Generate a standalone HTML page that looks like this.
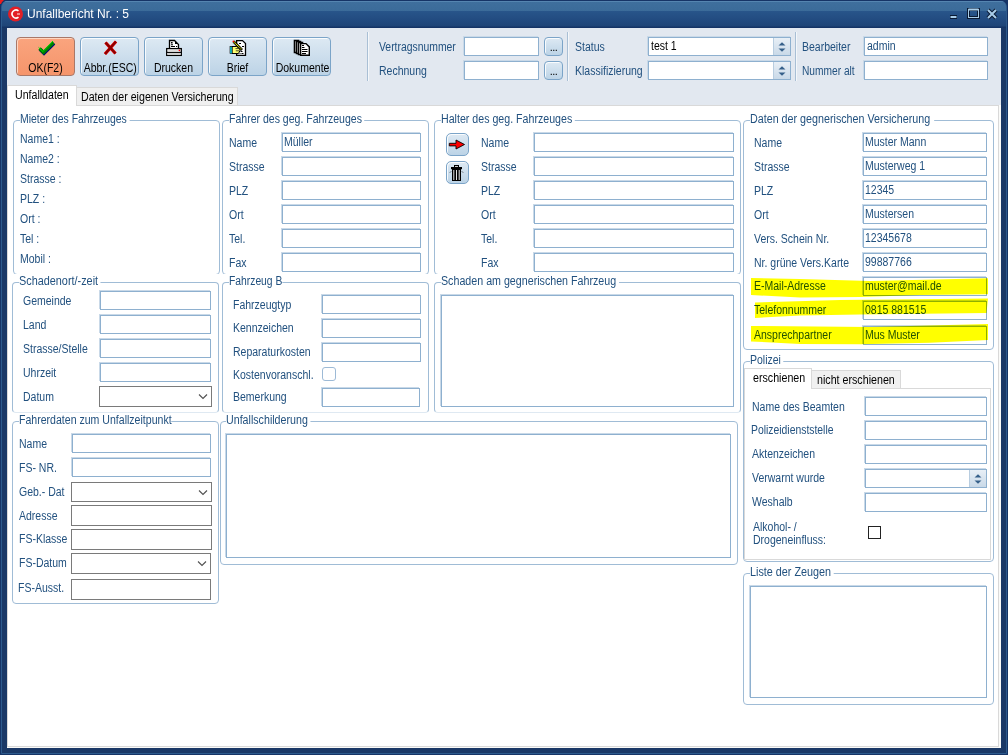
<!DOCTYPE html>
<html><head><meta charset="utf-8"><style>
*{margin:0;padding:0;box-sizing:border-box}
html,body{width:1008px;height:755px;overflow:hidden;background:#163466}
body{position:relative;font-family:"Liberation Sans",sans-serif;font-size:11px}
.t{position:absolute;white-space:nowrap;line-height:13px;font-size:11px}
.t.s{font-size:12px;line-height:14px;transform-origin:0 0;letter-spacing:0}
.a{position:absolute}
.frame{position:absolute;left:1px;top:1px;width:1006px;height:753px;background:#1a3866;border:1px solid #2d5a8c;border-radius:6px 6px 0 0}
.title{position:absolute;left:2px;top:1px;width:1004px;height:27px;background:linear-gradient(#5585b0 0px,#5585b0 1px,#3f6f9d 1px,#3b6b99 10px,#28558a 10px,#224b80 19px,#1f4577 25px,#143466 26px,#143466 27px);border-radius:5px 5px 0 0}
.client{position:absolute;left:7px;top:28px;width:994px;height:720px;background:#e2e8f0}
.page{position:absolute;background:#fff;border:1px solid #d9d9d9}
.tab1{position:absolute;background:#fff;border:1px solid #d9d9d9;border-bottom:none}
.tab2{position:absolute;background:#f0f0f0;border:1px solid #d9d9d9;border-bottom:none}
.ptab{position:absolute;background:#fff;border:1px solid #d9d9d9}
.ib{position:absolute;background:#fff;border:1px solid #8eb0cf;box-shadow:-1px -1px 0 #c9d9e8}
.ig{position:absolute;background:#fff;border:1px solid #7a7a7a}
.spin{position:absolute;background:linear-gradient(#e8eff6,#c9d9e8);border-left:1px solid #b8cde0}
.gb{position:absolute;border:1px solid #a0bcd6}
.clip{position:absolute;overflow:hidden}
.cap{background:#fff;padding-right:5px}
.tb{position:absolute;border:1px solid #7ba4c8;border-radius:4px;background:linear-gradient(#dde9f3,#bcd3e6);box-shadow:inset 1px 1px 0 rgba(255,255,255,0.85)}
.tb.or{border-color:#a97868;background:linear-gradient(#faa47e,#f5956b);box-shadow:inset 1px 1px 0 rgba(255,220,200,0.9)}
.sep{position:absolute;width:1px;background:#a9bfd5;box-shadow:1px 0 0 #f4f7fa}
.dots{position:absolute;border:1px solid #7ba4c8;border-radius:4px;background:linear-gradient(#dde9f3,#bcd3e6);box-shadow:inset 1px 1px 0 rgba(255,255,255,0.85);font-size:11px;line-height:19px;text-align:center;color:#000;letter-spacing:-0.5px}
.sb{position:absolute;border:1px solid #7ba4c8;border-radius:5px;background:linear-gradient(#dde9f3,#bcd3e6);box-shadow:inset 1px 1px 0 rgba(255,255,255,0.85)}
.ta{position:absolute;background:#fff;border:1px solid #8eb0cf;box-shadow:-1px -1px 0 #c9d9e8}
.cb{position:absolute;border:1px solid #9dbad6;border-radius:3px;background:#fff}
.cbk{position:absolute;border:1px solid #222;background:#fff}
.hl{position:absolute;background:#ffff00;mix-blend-mode:multiply}
</style></head><body>
<div class="frame"></div>
<svg class="a" style="left:0;top:0" width="5" height="5"><path d="M0 0H4L2 2L1 4H0Z" fill="#ec1c1c"/></svg>
<div class="title"></div>
<div class="client"></div>
<svg class="a" style="left:8px;top:6px" width="16" height="16"><circle cx="7.5" cy="8" r="7.5" fill="#e21f26"/><path d="M10.5 4.8 A4 4 0 1 0 10.5 11.2" fill="none" stroke="#fff" stroke-width="1.6"/><path d="M9 8h3" stroke="#f5a0a0" stroke-width="1.6"/></svg>
<div class="t" style="left:27px;top:7px;font-size:12px;line-height:14px;color:#fff;letter-spacing:0px">Unfallbericht Nr. : 5</div>
<svg class="a" style="left:948px;top:7px" width="52" height="14"><path d="M2 10h7" stroke="#0a1a33" stroke-width="4"/><path d="M2.5 10h6" stroke="#a9cde9" stroke-width="2"/><rect x="20.5" y="2.5" width="10" height="8" fill="none" stroke="#0a1a33" stroke-width="3"/><rect x="20.5" y="2.5" width="10" height="8" fill="none" stroke="#a9cde9" stroke-width="1"/><path d="M20.5 2.5h10" stroke="#a9cde9" stroke-width="2"/><path d="M40 3 L48 11 M48 3 L40 11" stroke="#0a1a33" stroke-width="4"/><path d="M40 3 L48 11 M48 3 L40 11" stroke="#a9cde9" stroke-width="2"/></svg>
<div class="tb or" style="left:16px;top:37px;width:59px;height:39px"></div>
<div class="t s" style="left:16px;top:61px;width:59px;text-align:center;color:#000;transform:scaleX(0.875);transform-origin:50% 0">OK(F2)</div>
<div class="tb" style="left:80px;top:37px;width:59px;height:39px"></div>
<div class="t s" style="left:80px;top:61px;width:59px;text-align:center;color:#000;transform:scaleX(0.875);transform-origin:50% 0">Abbr.(ESC)</div>
<div class="tb" style="left:144px;top:37px;width:59px;height:39px"></div>
<div class="t s" style="left:144px;top:61px;width:59px;text-align:center;color:#000;transform:scaleX(0.875);transform-origin:50% 0">Drucken</div>
<div class="tb" style="left:208px;top:37px;width:59px;height:39px"></div>
<div class="t s" style="left:208px;top:61px;width:59px;text-align:center;color:#000;transform:scaleX(0.875);transform-origin:50% 0">Brief</div>
<div class="tb" style="left:272px;top:37px;width:59px;height:39px"></div>
<div class="t s" style="left:272px;top:61px;width:59px;text-align:center;color:#000;transform:scaleX(0.875);transform-origin:50% 0">Dokumente</div>
<div class="sep" style="left:367px;top:32px;height:49px"></div>
<div class="sep" style="left:567px;top:32px;height:49px"></div>
<div class="sep" style="left:795px;top:32px;height:49px"></div>
<div class="t s" style="left:379px;top:40px;color:#22517f;transform:scaleX(0.866);">Vertragsnummer</div>
<div class="t s" style="left:379px;top:64px;color:#22517f;transform:scaleX(0.875);">Rechnung</div>
<div class="ib" style="left:464px;top:37px;width:75px;height:19px"></div>
<div class="ib" style="left:464px;top:61px;width:75px;height:19px"></div>
<div class="dots" style="left:544px;top:37px;width:19px;height:19px">...</div>
<div class="dots" style="left:544px;top:61px;width:19px;height:19px">...</div>
<div class="t s" style="left:575px;top:40px;color:#22517f;transform:scaleX(0.875);">Status</div>
<div class="t s" style="left:575px;top:64px;color:#22517f;transform:scaleX(0.875);">Klassifizierung</div>
<div class="ib" style="left:648px;top:37px;width:143px;height:19px"></div>
<div class="spin" style="left:773px;top:38px;width:17px;height:17px"></div>
<svg class="a" style="left:777.5px;top:40.5px" width="8" height="12"><path d="M0.5 4.5 L4 1.2 L7.5 4.5Z M0.5 7.5 L4 10.8 L7.5 7.5Z" fill="#36608a"/></svg>
<div class="t s" style="left:651px;top:39px;color:#000;transform:scaleX(0.875);">test 1</div>
<div class="ib" style="left:648px;top:61px;width:143px;height:19px"></div>
<div class="spin" style="left:773px;top:62px;width:17px;height:17px"></div>
<svg class="a" style="left:777.5px;top:64.5px" width="8" height="12"><path d="M0.5 4.5 L4 1.2 L7.5 4.5Z M0.5 7.5 L4 10.8 L7.5 7.5Z" fill="#36608a"/></svg>
<div class="t s" style="left:802px;top:40px;color:#22517f;transform:scaleX(0.875);">Bearbeiter</div>
<div class="t s" style="left:802px;top:64px;color:#22517f;transform:scaleX(0.85);">Nummer alt</div>
<div class="ib" style="left:864px;top:37px;width:124px;height:19px"></div>
<div class="t s" style="left:867px;top:39px;color:#22517f;transform:scaleX(0.875);">admin</div>
<div class="ib" style="left:864px;top:61px;width:124px;height:19px"></div>
<div style="position:absolute;left:7px;top:105px;width:994px;height:643px;background:#fafaf8"></div>
<div class="page" style="left:7px;top:105px;width:992px;height:642px"></div>
<div class="tab2" style="left:76px;top:87px;width:162px;height:18px"></div>
<div class="tab1" style="left:7px;top:85px;width:70px;height:21px"></div>
<div class="t s" style="left:15px;top:88px;color:#000;transform:scaleX(0.883);">Unfalldaten</div>
<div class="t s" style="left:81px;top:90px;color:#000;transform:scaleX(0.887);">Daten der eigenen Versicherung</div>
<div class="clip" style="left:13px;top:120px;width:207px;height:154px"><div class="gb" style="left:0;top:0;width:207px;height:155px;border-radius:4px"></div></div>
<div class="t s cap" style="left:20px;top:112px;color:#22517f;transform:scaleX(0.87);padding-right:3px">Mieter des Fahrzeuges</div>
<div class="t s" style="left:20px;top:132px;color:#22517f;transform:scaleX(0.875);">Name1 :</div>
<div class="t s" style="left:20px;top:152px;color:#22517f;transform:scaleX(0.875);">Name2 :</div>
<div class="t s" style="left:20px;top:172px;color:#22517f;transform:scaleX(0.875);">Strasse :</div>
<div class="t s" style="left:20px;top:192px;color:#22517f;transform:scaleX(0.875);">PLZ :</div>
<div class="t s" style="left:20px;top:212px;color:#22517f;transform:scaleX(0.875);">Ort :</div>
<div class="t s" style="left:20px;top:232px;color:#22517f;transform:scaleX(0.875);">Tel :</div>
<div class="t s" style="left:20px;top:252px;color:#22517f;transform:scaleX(0.875);">Mobil :</div>
<div class="clip" style="left:222px;top:120px;width:207px;height:154px"><div class="gb" style="left:0;top:0;width:207px;height:155px;border-radius:4px"></div></div>
<div class="t s cap" style="left:229px;top:112px;color:#22517f;transform:scaleX(0.878);padding-right:3px">Fahrer des geg. Fahrzeuges</div>
<div class="t s" style="left:229px;top:136px;color:#22517f;transform:scaleX(0.875);">Name</div>
<div class="ib" style="left:282px;top:133px;width:139px;height:19px"></div>
<div class="t s" style="left:284px;top:135px;color:#22517f;transform:scaleX(0.875);">Müller</div>
<div class="t s" style="left:229px;top:160px;color:#22517f;transform:scaleX(0.875);">Strasse</div>
<div class="ib" style="left:282px;top:157px;width:139px;height:19px"></div>
<div class="t s" style="left:229px;top:184px;color:#22517f;transform:scaleX(0.875);">PLZ</div>
<div class="ib" style="left:282px;top:181px;width:139px;height:19px"></div>
<div class="t s" style="left:229px;top:208px;color:#22517f;transform:scaleX(0.875);">Ort</div>
<div class="ib" style="left:282px;top:205px;width:139px;height:19px"></div>
<div class="t s" style="left:229px;top:232px;color:#22517f;transform:scaleX(0.875);">Tel.</div>
<div class="ib" style="left:282px;top:229px;width:139px;height:19px"></div>
<div class="t s" style="left:229px;top:256px;color:#22517f;transform:scaleX(0.875);">Fax</div>
<div class="ib" style="left:282px;top:253px;width:139px;height:19px"></div>
<div class="clip" style="left:434px;top:120px;width:307px;height:154px"><div class="gb" style="left:0;top:0;width:307px;height:155px;border-radius:4px"></div></div>
<div class="t s cap" style="left:441px;top:112px;color:#22517f;transform:scaleX(0.886);padding-right:3px">Halter des geg. Fahrzeuges</div>
<div class="t s" style="left:481px;top:136px;color:#22517f;transform:scaleX(0.875);">Name</div>
<div class="ib" style="left:534px;top:133px;width:200px;height:19px"></div>
<div class="t s" style="left:481px;top:160px;color:#22517f;transform:scaleX(0.875);">Strasse</div>
<div class="ib" style="left:534px;top:157px;width:200px;height:19px"></div>
<div class="t s" style="left:481px;top:184px;color:#22517f;transform:scaleX(0.875);">PLZ</div>
<div class="ib" style="left:534px;top:181px;width:200px;height:19px"></div>
<div class="t s" style="left:481px;top:208px;color:#22517f;transform:scaleX(0.875);">Ort</div>
<div class="ib" style="left:534px;top:205px;width:200px;height:19px"></div>
<div class="t s" style="left:481px;top:232px;color:#22517f;transform:scaleX(0.875);">Tel.</div>
<div class="ib" style="left:534px;top:229px;width:200px;height:19px"></div>
<div class="t s" style="left:481px;top:256px;color:#22517f;transform:scaleX(0.875);">Fax</div>
<div class="ib" style="left:534px;top:253px;width:200px;height:19px"></div>
<div class="sb" style="left:446px;top:133px;width:23px;height:23px"></div>
<div class="sb" style="left:446px;top:161px;width:23px;height:23px"></div>
<div class="gb" style="left:743px;top:120px;width:251px;height:230px;border-radius:4px;"></div>
<div class="t s cap" style="left:750px;top:112px;color:#22517f;transform:scaleX(0.894);padding-right:5px">Daten der gegnerischen Versicherung</div>
<div class="t s" style="left:754px;top:136px;color:#22517f;transform:scaleX(0.875);">Name</div>
<div class="ib" style="left:863px;top:133px;width:124px;height:19px"></div>
<div class="t s" style="left:865px;top:135px;color:#22517f;transform:scaleX(0.875);">Muster Mann</div>
<div class="t s" style="left:754px;top:160px;color:#22517f;transform:scaleX(0.875);">Strasse</div>
<div class="ib" style="left:863px;top:157px;width:124px;height:19px"></div>
<div class="t s" style="left:865px;top:159px;color:#22517f;transform:scaleX(0.875);">Musterweg 1</div>
<div class="t s" style="left:754px;top:184px;color:#22517f;transform:scaleX(0.875);">PLZ</div>
<div class="ib" style="left:863px;top:181px;width:124px;height:19px"></div>
<div class="t s" style="left:865px;top:183px;color:#22517f;transform:scaleX(0.875);">12345</div>
<div class="t s" style="left:754px;top:208px;color:#22517f;transform:scaleX(0.875);">Ort</div>
<div class="ib" style="left:863px;top:205px;width:124px;height:19px"></div>
<div class="t s" style="left:865px;top:207px;color:#22517f;transform:scaleX(0.875);">Mustersen</div>
<div class="t s" style="left:754px;top:232px;color:#22517f;transform:scaleX(0.875);">Vers. Schein Nr.</div>
<div class="ib" style="left:863px;top:229px;width:124px;height:19px"></div>
<div class="t s" style="left:865px;top:231px;color:#22517f;transform:scaleX(0.875);">12345678</div>
<div class="t s" style="left:754px;top:256px;color:#22517f;transform:scaleX(0.875);">Nr. grüne Vers.Karte</div>
<div class="ib" style="left:863px;top:253px;width:124px;height:19px"></div>
<div class="t s" style="left:865px;top:255px;color:#22517f;transform:scaleX(0.875);">99887766</div>
<div class="t s" style="left:754px;top:279px;color:#22517f;transform:scaleX(0.875);">E-Mail-Adresse</div>
<div class="ib" style="left:863px;top:277px;width:124px;height:19px"></div>
<div class="t s" style="left:865px;top:279px;color:#22517f;transform:scaleX(0.875);">muster@mail.de</div>
<div class="t s" style="left:754px;top:303px;color:#22517f;transform:scaleX(0.875);">Telefonnummer</div>
<div class="ib" style="left:863px;top:301px;width:124px;height:19px"></div>
<div class="t s" style="left:865px;top:303px;color:#22517f;transform:scaleX(0.875);">0815 881515</div>
<div class="t s" style="left:754px;top:328px;color:#22517f;transform:scaleX(0.875);">Ansprechpartner</div>
<div class="ib" style="left:863px;top:326px;width:124px;height:19px"></div>
<div class="t s" style="left:865px;top:328px;color:#22517f;transform:scaleX(0.875);">Mus Muster</div>
<div class="gb" style="left:12px;top:282px;width:207px;height:131px;border-radius:4px;border-bottom-color:#dfe9f2"></div>
<div class="t s cap" style="left:19px;top:274px;color:#22517f;transform:scaleX(0.905);padding-right:3px">Schadenort/-zeit</div>
<div class="t s" style="left:23px;top:294px;color:#22517f;transform:scaleX(0.875);">Gemeinde</div>
<div class="ib" style="left:100px;top:291px;width:111px;height:19px"></div>
<div class="t s" style="left:23px;top:318px;color:#22517f;transform:scaleX(0.875);">Land</div>
<div class="ib" style="left:100px;top:315px;width:111px;height:19px"></div>
<div class="t s" style="left:23px;top:342px;color:#22517f;transform:scaleX(0.875);">Strasse/Stelle</div>
<div class="ib" style="left:100px;top:339px;width:111px;height:19px"></div>
<div class="t s" style="left:23px;top:366px;color:#22517f;transform:scaleX(0.875);">Uhrzeit</div>
<div class="ib" style="left:100px;top:363px;width:111px;height:19px"></div>
<div class="t s" style="left:23px;top:390px;color:#22517f;transform:scaleX(0.875);">Datum</div>
<div class="ig" style="left:99px;top:386px;width:113px;height:21px"></div>
<svg class="a" style="left:197.5px;top:393.0px" width="10" height="7"><path d="M1 1.5 L5 5.5 L9 1.5" fill="none" stroke="#505050" stroke-width="1.1"/></svg>
<div class="gb" style="left:222px;top:282px;width:207px;height:131px;border-radius:4px;border-bottom-color:#dfe9f2"></div>
<div class="t s cap" style="left:229px;top:274px;color:#22517f;transform:scaleX(0.86);padding-right:0px">Fahrzeug B</div>
<div class="t s" style="left:233px;top:298px;color:#22517f;transform:scaleX(0.875);">Fahrzeugtyp</div>
<div class="ib" style="left:322px;top:295px;width:99px;height:19px"></div>
<div class="t s" style="left:233px;top:321px;color:#22517f;transform:scaleX(0.875);">Kennzeichen</div>
<div class="ib" style="left:322px;top:319px;width:99px;height:19px"></div>
<div class="t s" style="left:233px;top:345px;color:#22517f;transform:scaleX(0.875);">Reparaturkosten</div>
<div class="ib" style="left:322px;top:343px;width:99px;height:19px"></div>
<div class="t s" style="left:233px;top:368px;color:#22517f;transform:scaleX(0.875);">Kostenvoranschl.</div>
<div class="cb" style="left:322px;top:367px;width:14px;height:14px"></div>
<div class="t s" style="left:233px;top:390px;color:#22517f;transform:scaleX(0.875);">Bemerkung</div>
<div class="ib" style="left:322px;top:388px;width:98px;height:19px"></div>
<div class="gb" style="left:434px;top:282px;width:307px;height:131px;border-radius:4px;border-bottom-color:#dfe9f2"></div>
<div class="t s cap" style="left:441px;top:274px;color:#22517f;transform:scaleX(0.89);padding-right:3px">Schaden am gegnerischen Fahrzeug</div>
<div class="ta" style="left:441px;top:295px;width:293px;height:112px"></div>
<div class="gb" style="left:12px;top:421px;width:207px;height:183px;border-radius:4px;"></div>
<div class="t s cap" style="left:19px;top:413px;color:#22517f;transform:scaleX(0.88);padding-right:0px">Fahrerdaten zum Unfallzeitpunkt</div>
<div class="t s" style="left:19px;top:437px;color:#22517f;transform:scaleX(0.875);">Name</div>
<div class="ib" style="left:72px;top:434px;width:139px;height:19px"></div>
<div class="t s" style="left:19px;top:461px;color:#22517f;transform:scaleX(0.875);">FS- NR.</div>
<div class="ib" style="left:72px;top:458px;width:139px;height:19px"></div>
<div class="t s" style="left:19px;top:485px;color:#22517f;transform:scaleX(0.875);">Geb.- Dat</div>
<div class="ig" style="left:71px;top:482px;width:141px;height:20px"></div>
<svg class="a" style="left:197.5px;top:488.5px" width="10" height="7"><path d="M1 1.5 L5 5.5 L9 1.5" fill="none" stroke="#505050" stroke-width="1.1"/></svg>
<div class="t s" style="left:19px;top:509px;color:#22517f;transform:scaleX(0.875);">Adresse</div>
<div class="ig" style="left:71px;top:505px;width:141px;height:21px"></div>
<div class="t s" style="left:19px;top:532px;color:#22517f;transform:scaleX(0.875);">FS-Klasse</div>
<div class="ig" style="left:71px;top:529px;width:141px;height:21px"></div>
<div class="t s" style="left:19px;top:556px;color:#22517f;transform:scaleX(0.875);">FS-Datum</div>
<div class="ig" style="left:71px;top:553px;width:140px;height:21px"></div>
<svg class="a" style="left:196.5px;top:560.0px" width="10" height="7"><path d="M1 1.5 L5 5.5 L9 1.5" fill="none" stroke="#505050" stroke-width="1.1"/></svg>
<div class="t s" style="left:18px;top:581px;color:#22517f;transform:scaleX(0.875);">FS-Ausst.</div>
<div class="ig" style="left:71px;top:579px;width:140px;height:21px"></div>
<div class="gb" style="left:220px;top:421px;width:518px;height:144px;border-radius:4px;"></div>
<div class="t s cap" style="left:226px;top:413px;color:#22517f;transform:scaleX(0.889);padding-right:3px">Unfallschilderung</div>
<div class="ta" style="left:226px;top:434px;width:505px;height:124px"></div>
<div class="gb" style="left:743px;top:361px;width:251px;height:201px;border-radius:4px;"></div>
<div class="t s cap" style="left:750px;top:353px;color:#22517f;transform:scaleX(0.875);padding-right:3px">Polizei</div>
<div class="ptab" style="left:744px;top:388px;width:247px;height:172px"></div>
<div class="tab2" style="left:811px;top:370px;width:90px;height:18px"></div>
<div class="tab1" style="left:744px;top:368px;width:68px;height:21px"></div>
<div class="t s" style="left:752.5px;top:371px;color:#000;transform:scaleX(0.89);">erschienen</div>
<div class="t s" style="left:816.5px;top:373px;color:#000;transform:scaleX(0.89);">nicht erschienen</div>
<div class="t s" style="left:752px;top:400px;color:#22517f;transform:scaleX(0.875);">Name des Beamten</div>
<div class="ib" style="left:865px;top:397px;width:122px;height:19px"></div>
<div class="t s" style="left:751px;top:423px;color:#22517f;transform:scaleX(0.865);">Polizeidienststelle</div>
<div class="ib" style="left:865px;top:421px;width:122px;height:19px"></div>
<div class="t s" style="left:752px;top:447px;color:#22517f;transform:scaleX(0.875);">Aktenzeichen</div>
<div class="ib" style="left:865px;top:445px;width:122px;height:19px"></div>
<div class="t s" style="left:752px;top:471px;color:#22517f;transform:scaleX(0.875);">Verwarnt wurde</div>
<div class="ib" style="left:865px;top:469px;width:122px;height:19px"></div>
<div class="spin" style="left:969px;top:470px;width:17px;height:17px"></div>
<svg class="a" style="left:973.5px;top:472.5px" width="8" height="12"><path d="M0.5 4.5 L4 1.2 L7.5 4.5Z M0.5 7.5 L4 10.8 L7.5 7.5Z" fill="#36608a"/></svg>
<div class="t s" style="left:752px;top:495px;color:#22517f;transform:scaleX(0.875);">Weshalb</div>
<div class="ib" style="left:865px;top:493px;width:122px;height:19px"></div>
<div class="t s" style="left:753px;top:520px;color:#22517f;transform:scaleX(0.875);">Alkohol- /</div>
<div class="t s" style="left:753px;top:533px;color:#22517f;transform:scaleX(0.875);">Drogeneinfluss:</div>
<div class="cbk" style="left:868px;top:526px;width:13px;height:13px"></div>
<div class="gb" style="left:743px;top:573px;width:251px;height:132px;border-radius:4px;"></div>
<div class="t s cap" style="left:750px;top:565px;color:#22517f;transform:scaleX(0.9);padding-right:3px">Liste der Zeugen</div>
<div class="ta" style="left:750px;top:586px;width:237px;height:112px"></div>
<svg class="a" style="left:0;top:0;mix-blend-mode:multiply" width="1008" height="755"><path fill="#ffff00" d="M751 278 L800 279 L870 281 L988 278.3 L988 294.2 L920 295 L860 297 L800 297.5 L751 295 Z"/><path fill="#ffff00" d="M755 302.4 L840 300 L988 298.4 L986.5 313 L860 314.4 L800 315.5 L755 318 Z"/><path fill="#ffff00" d="M751 326 L870 326.9 L988 324 L988 340 L930 342.8 L860 344.2 L800 344 L751 341.4 Z"/></svg>

<svg class="a" style="left:0;top:0" width="1008" height="755">
<path d="M39.5 48.5 L43.5 52.5 L53.5 42.5" fill="none" stroke="#000080" stroke-width="3.6" transform="translate(0.5,0.8)"/>
<path d="M39.5 48.5 L43.5 52.5 L53.5 42.5" fill="none" stroke="#008000" stroke-width="3.2"/>
<path d="M38.6 47.4 L43 51.6 L53 41" fill="none" stroke="#00e000" stroke-width="1"/>
<path d="M105.5 42.5 L115.5 53.5 M116 41.5 L105 54" stroke="#ff0000" stroke-width="3.2"/>
<path d="M105.5 42.5 L115.5 53.5 M116 41.5 L105 54" stroke="#8a0000" stroke-width="2.2"/>
<path d="M169.5 48 V40.5 H174.5 L178.5 44.5 V48" fill="#fff" stroke="#000" stroke-width="1.3"/>
<path d="M171 42h1.6v1.4h-1.6z M171 44.2h2v1h-2z M171 46h4v1h-4z M176 46h1.2v1h-1.2z M175 41v3h3" fill="#000" stroke="none"/>
<rect x="166.7" y="48.6" width="14.6" height="6.8" fill="#fff" stroke="#000" stroke-width="1.3"/>
<path d="M167.5 50.5 H180.5" stroke="#bbb" stroke-width="1.4" stroke-dasharray="1 1"/>
<circle cx="179.4" cy="50.4" r="0.8" fill="#f00"/>
<path d="M166.7 52.4 H181.3" stroke="#000" stroke-width="1.1"/>
<rect x="167.4" y="53" width="13.2" height="1.8" fill="#cfcfcf"/>
<path d="M236.6 55.4 V40.6 H242.5 L245.5 43.6 V55.4 Z" fill="#fff" stroke="#000" stroke-width="1.3"/>
<path d="M239 43h2v1h-2z M242 46h2v1h-2z M240.5 51h2v1h-2z M239.5 53h1v1h-1z M241.5 53h2v1h-2z" fill="#000"/>
<path d="M233.5 41.5 L242 50" stroke="#000" stroke-width="2.6"/>
<path d="M233.8 41.8 L241.5 49.5" stroke="#ffff00" stroke-width="1.2" stroke-dasharray="1 0.6"/>
<circle cx="233.4" cy="41.3" r="0.9" fill="#f00"/>
<path d="M232 46.5 H236.5 L239.5 48.5 L240 50.5 L238.5 53.5 H232 Z" fill="#ffff70" stroke="#000" stroke-width="1"/>
<path d="M235.5 48.6 H239.3 M235.8 50.8 H239.2" stroke="#000" stroke-width="0.7"/>
<rect x="230" y="46.5" width="2" height="7" fill="#10e8f8" stroke="#000" stroke-width="0.6"/>
<path d="M294.5 40.5 H298.5 V52.5 H294.5 Z" fill="#fff" stroke="#000" stroke-width="1.6"/>
<path d="M296.5 41.5 H300.5 V53.5 H296.5 Z" fill="#fff" stroke="#000" stroke-width="1.6"/>
<path d="M298.5 42.5 H302.5 V54.5 H298.5 Z" fill="#fff" stroke="#000" stroke-width="1.6"/>
<path d="M300.6 55.3 V43.6 H306 L309.3 46.9 V55.3 Z" fill="#fff" stroke="#000" stroke-width="1.4"/>
<path d="M302 45.5h2 M302 47.5h2.5 M302 49.5h5.5 M302 51.5h5.5 M302 53.5h4" stroke="#000" stroke-width="1"/>
<path d="M449.3 143.3 H456 V140 L464.5 144.5 L456 149 V145.9 H449.3 Z" fill="#ff0000" stroke="#000" stroke-width="0.9"/>
<rect x="454.5" y="165.5" width="4" height="2" fill="#ccc" stroke="#000" stroke-width="1"/>
<rect x="451" y="167" width="11" height="2.2" fill="#000"/>
<path d="M452 169 h9 v12 h-9z" fill="#000"/>
<path d="M453.8 170 v10 M456.5 170 v10 M459.2 170 v10" stroke="#fff" stroke-width="0.9"/>
<path d="M451 171.5 l-1 1 M462 171.5 l1 1" stroke="#000" stroke-width="0.8"/>
</svg>
</body></html>
